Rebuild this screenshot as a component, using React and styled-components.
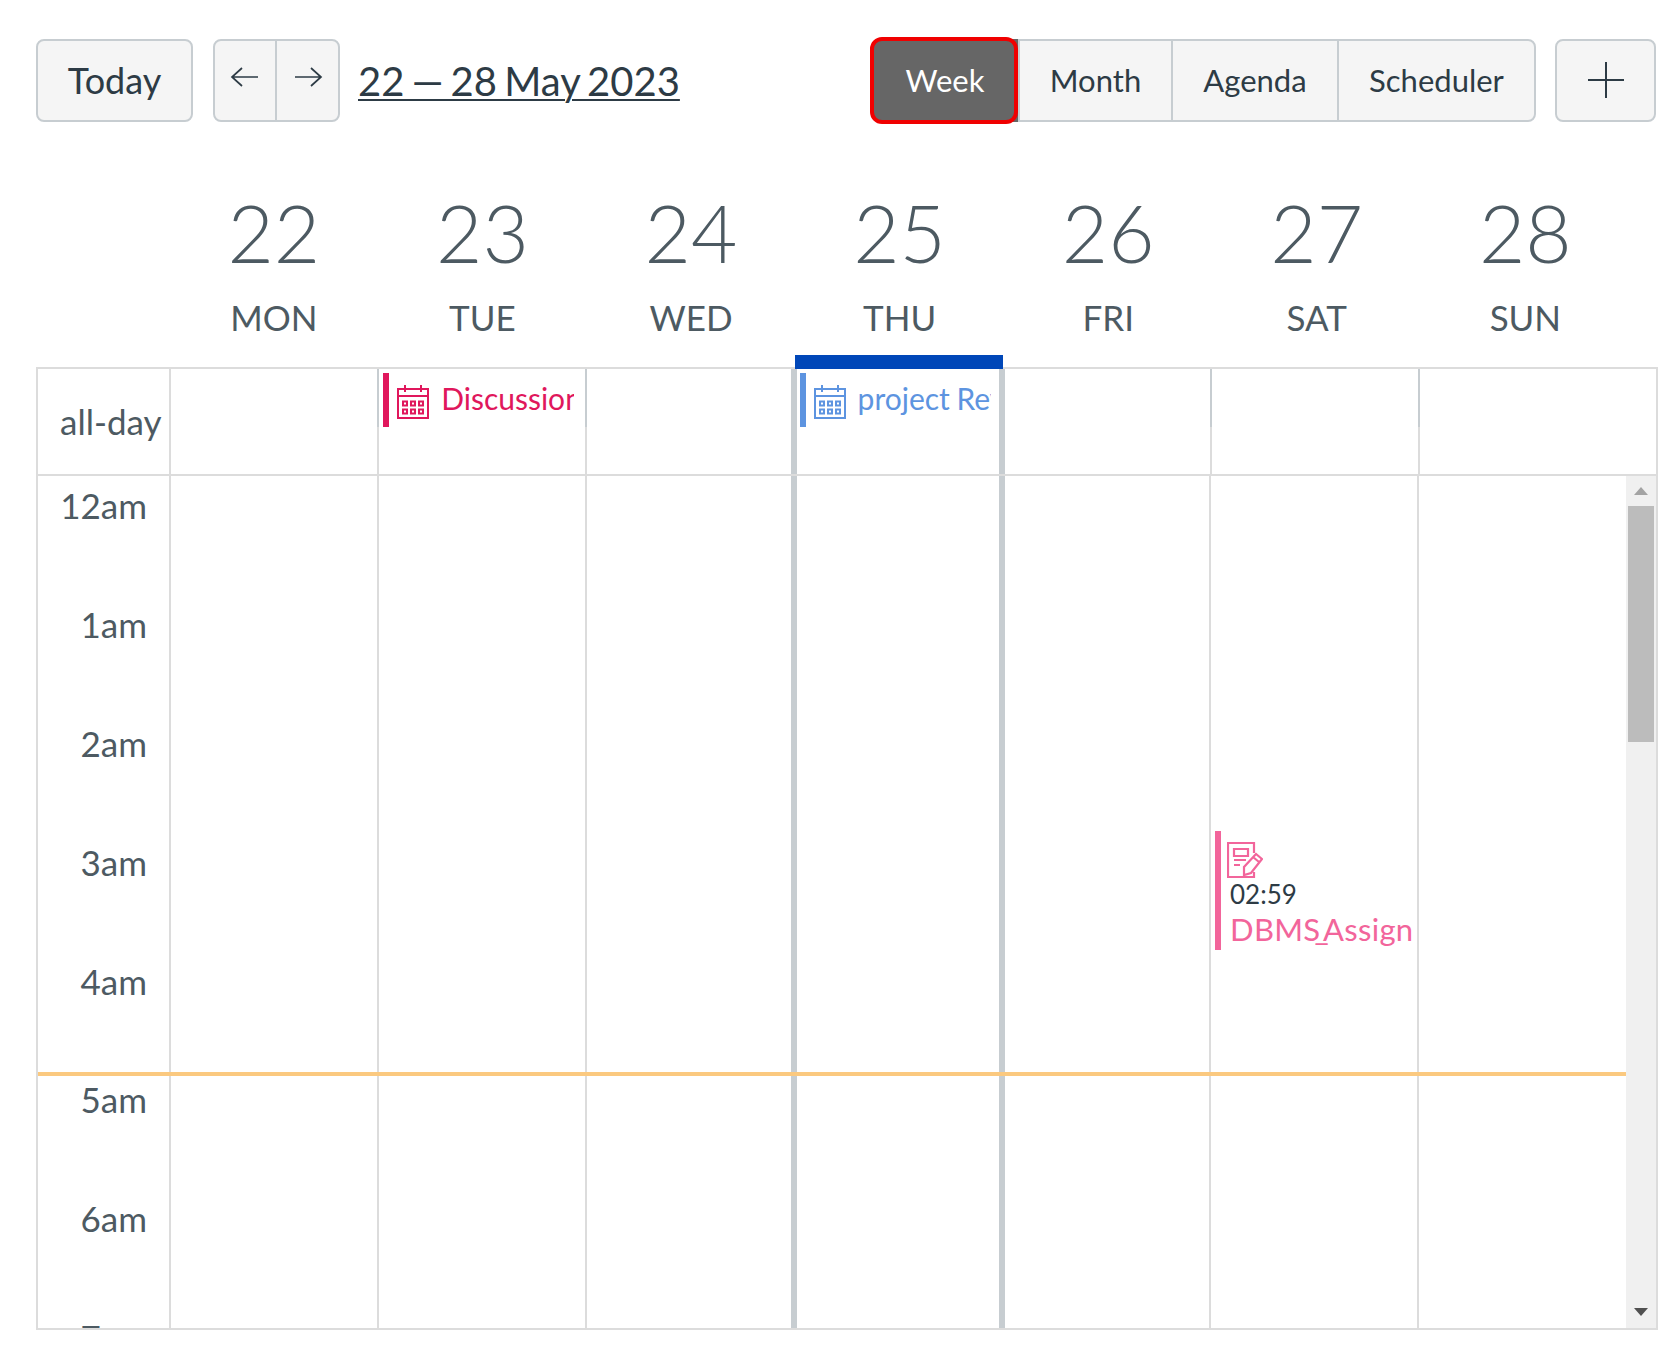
import styled, { createGlobalStyle } from "styled-components";

const colors = {
  text: "#2d3b45",
  label: "#4d5a62",
  line: "#dcdcdc",
  rail: "#c7cdd1",
  button: "#f5f5f5",
  red: "#e0175c",
  blue: "#5d94e0",
  pink: "#f2659b",
};

const GlobalStyle = createGlobalStyle`
  html, body {
    margin: 0;
    background: white;
    font-family: Lato, "Open Sans", "Liberation Sans", sans-serif;
    color: ${colors.text};
  }
`;

const Page = styled.div`
  width: 1678px;
  height: 1362px;
  box-sizing: border-box;
  padding: 39px 20px 0 36px;
  overflow: hidden;
`;

const Toolbar = styled.div`
  display: flex;
  align-items: center;
  height: 83px;
  padding-right: 2px;
`;

const Button = styled.button`
  height: 83px;
  box-sizing: border-box;
  display: flex;
  align-items: center;
  justify-content: center;
  background: ${colors.button};
  border: 2px solid ${colors.rail};
  border-radius: 8px;
  color: ${colors.text};
  font: 400 36px Lato, sans-serif;
  padding: 0 0 2px;
  width: ${(p) => p.$width}px;
  margin-left: ${(p) => p.$gap || 0}px;
`;

const NavGroup = styled.div`
  display: flex;
  height: 83px;
  width: 127px;
  box-sizing: border-box;
  margin-left: 20px;
  background: ${colors.button};
  border: 2px solid ${colors.rail};
  border-radius: 8px;
`;

const NavButton = styled.button`
  flex: 0 0 60px;
  padding: 0 0 8px;
  background: none;
  border: none;
  color: ${colors.text};
  display: flex;
  align-items: center;
  justify-content: center;
  & + & {
    flex: 1;
    border-left: 2px solid ${colors.rail};
  }
`;

const DateTitle = styled.a`
  margin-left: 18px;
  font-size: 40px;
  word-spacing: -3px;
  text-decoration: underline;
  text-decoration-thickness: 2px;
  text-underline-offset: 3px;
  color: ${colors.text};
`;

const ViewGroup = styled.div`
  margin-left: auto;
  display: flex;
  height: 83px;
  box-sizing: border-box;
  background: ${colors.button};
  border: 2px solid ${colors.rail};
  border-radius: 8px;
`;

const ViewButton = styled.button`
  position: relative;
  box-sizing: border-box;
  width: ${(p) => p.$width}px;
  padding: 0 0 2px;
  font: 400 31px Lato, sans-serif;
  border: none;
  background: ${(p) => (p.$active ? "#666666" : "none")};
  color: ${(p) => (p.$active ? "white" : colors.text)};
  & + & {
    border-left: 2px solid ${colors.rail};
  }
  ${(p) =>
    p.$active &&
    `
    margin: -2px 0 -2px -2px;
    height: 83px;
    border-radius: 12px 0 0 12px;
    & + button { border-left: none; }
    &::after {
      content: "";
      position: absolute;
      inset: -2px 0 -2px -2px;
      border: 4px solid #f00000;
      border-radius: 12px;
    }
  `}
`;

const DayHeader = styled.div`
  display: grid;
  grid-template-columns: 133px repeat(7, 208.6px);
  padding-left: 2px;
  height: 245px;
  box-sizing: border-box;
`;

const DayHead = styled.div`
  position: relative;
  text-align: center;
  padding-right: 3px;
  ${(p) =>
    p.$today &&
    `
    &::after {
      content: "";
      position: absolute;
      left: -2px;
      right: 2px;
      bottom: -2px;
      height: 14px;
      background: #0047b8;
    }
  `}
`;

const DayNumber = styled.div`
  font-size: 80px;
  font-weight: 300;
  line-height: 80px;
  margin-top: 70px;
  color: ${colors.label};
`;

const DayName = styled.div`
  font-size: 35px;
  line-height: 40px;
  margin-top: 25px;
  color: ${colors.label};
`;

const Calendar = styled.div`
  border: 2px solid ${colors.line};
  width: 1622px;
  box-sizing: border-box;
`;

const AllDayRow = styled.div`
  display: grid;
  grid-template-columns: 133px repeat(6, 208.2px) 1fr;
  height: 107px;
  box-sizing: border-box;
  border-bottom: 2px solid ${colors.line};
`;

const AllDayLabel = styled.div`
  font-size: 35px;
  color: ${colors.label};
  padding: 31px 0 0 22px;
  white-space: nowrap;
  border-right: 2px solid ${colors.line};
`;

const AllDayCell = styled.div`
  position: relative;
  min-width: 0;
  padding: 4px 11px 0 4px;
  border-right: 2px solid ${(p) => (p.$last ? "transparent" : colors.line)};
  &::after {
    content: "";
    display: ${(p) => (p.$last ? "none" : "block")};
    position: absolute;
    top: 0;
    right: -2px;
    width: 2px;
    height: 58px;
    background: ${colors.rail};
  }
  ${(p) =>
    p.$today &&
    `
    &::before, &::after {
      content: "";
      display: block;
      position: absolute;
      top: 0;
      bottom: 0;
      height: auto;
      width: 6px;
      background: ${colors.rail};
    }
    &::before { left: -5px; }
    &::after { right: -3px; }
  `}
`;

const AllDayEvent = styled.div`
  display: flex;
  align-items: flex-start;
  height: 54px;
  overflow: hidden;
  border-left: 6px solid ${(p) => p.$color};
  color: ${(p) => p.$color};
  font-size: 30px;
  word-spacing: -1px;
  line-height: 51px;
  white-space: nowrap;
  padding-left: 8px;
  box-sizing: border-box;
  svg {
    flex: none;
    margin: 10px 12px 0 0;
  }
`;

const TimeArea = styled.div`
  display: flex;
  height: 852px;
  overflow: hidden;
`;

const TimeGrid = styled.div`
  flex: 1;
  display: grid;
  grid-template-columns: 133px repeat(6, 208px) 1fr;
  position: relative;
  overflow: hidden;
`;

const HourColumn = styled.div`
  border-right: 2px solid ${colors.line};
  overflow: hidden;
`;

const HourLabel = styled.div`
  height: 118.9px;
  padding: 4px 22px 0 0;
  box-sizing: border-box;
  text-align: right;
  font-size: 35px;
  line-height: 50px;
  color: ${colors.label};
`;

const DayColumn = styled.div`
  position: relative;
  min-width: 0;
  border-right: 2px solid ${(p) => (p.$last ? "transparent" : colors.line)};
  ${(p) =>
    p.$today &&
    `
    &::before, &::after {
      content: "";
      position: absolute;
      top: 0;
      bottom: 0;
      width: 6px;
      background: ${colors.rail};
    }
    &::before { left: -4px; }
    &::after { right: -4px; }
  `}
`;

const TimedEvent = styled.div`
  position: absolute;
  left: 4px;
  right: 4px;
  top: ${(p) => p.$top}px;
  height: 119px;
  overflow: hidden;
  box-sizing: border-box;
  border-left: 6px solid ${colors.pink};
  padding: 11px 0 0 6px;
  color: ${colors.pink};
  white-space: nowrap;
  svg {
    display: block;
  }
`;

const EventTime = styled.div`
  font-size: 26px;
  line-height: 30px;
  margin: 1px 0 0 3px;
  color: ${colors.text};
`;

const EventName = styled.div`
  font-size: 31px;
  letter-spacing: 0.3px;
  line-height: 41px;
  margin-left: 3px;
`;

const Underscore = styled.span`
  margin: 0 -6px;
`;

const NowLine = styled.div`
  position: absolute;
  left: 0;
  right: 0;
  top: ${(p) => p.$top}px;
  height: 4px;
  background: #fbc97f;
`;

const Scrollbar = styled.div`
  width: 30px;
  flex: none;
  box-sizing: border-box;
  background: #f0f0f0;
  display: flex;
  flex-direction: column;
  align-items: center;
  padding-top: 11px;
`;

const ScrollArrow = styled.div`
  width: 0;
  height: 0;
  border-left: 7px solid transparent;
  border-right: 7px solid transparent;
  ${(p) =>
    p.$down
      ? "border-top: 8px solid #505050; margin-top: auto; margin-bottom: 12px;"
      : "border-bottom: 8px solid #a3a3a3;"}
`;

const ScrollThumb = styled.div`
  width: 26px;
  height: 236px;
  margin-top: 11px;
  background: #bcbcbc;
`;

const days = [
  ["22", "MON"],
  ["23", "TUE"],
  ["24", "WED"],
  ["25", "THU"],
  ["26", "FRI"],
  ["27", "SAT"],
  ["28", "SUN"],
];

const hours = ["12am", "1am", "2am", "3am", "4am", "5am", "6am", "7am"];

const HOUR_HEIGHT = 118.7;

const ArrowIcon = ({ flip }) => (
  <svg width="30" height="22" viewBox="0 0 30 22" fill="none" stroke="currentColor" strokeWidth="1.7">
    {flip ? (
      <path d="M2 11h26M18 2l10 9-10 9" />
    ) : (
      <path d="M28 11H2M12 2 2 11l10 9" />
    )}
  </svg>
);

const CalendarIcon = () => (
  <svg width="32" height="36" viewBox="0 0 32 36" fill="none" stroke="currentColor" strokeWidth="2">
    <path d="M1 6h30v29H1zM1 13h30M8 2v7M24 2v7" />
    <path d="M6 18.5h4v4H6zM14 18.5h4v4h-4zM22 18.5h4v4h-4zM6 26.5h4v4H6zM14 26.5h4v4h-4zM22 26.5h4v4h-4z" />
  </svg>
);

const AssignmentIcon = () => (
  <svg width="36" height="36" viewBox="0 0 36 36" fill="none" stroke="currentColor" strokeWidth="2.2">
    <path d="M27 11V1H1v34h26v-5" />
    <path d="M7 7h14v7H7zM7 18h12M7 23h6" />
    <path d="M17 33v-8L29 12l6 5-11 14zM26 15l6 5" />
  </svg>
);

export default function App() {
  return (
    <Page>
      <GlobalStyle />
      <Toolbar>
        <Button $width={157}>Today</Button>
        <NavGroup>
          <NavButton>
            <ArrowIcon />
          </NavButton>
          <NavButton>
            <ArrowIcon flip />
          </NavButton>
        </NavGroup>
        <DateTitle>22 — 28 May 2023</DateTitle>
        <ViewGroup>
          <ViewButton $active $width={146}>
            Week
          </ViewButton>
          <ViewButton $width={153}>Month</ViewButton>
          <ViewButton $width={166}>Agenda</ViewButton>
          <ViewButton $width={197}>Scheduler</ViewButton>
        </ViewGroup>
        <Button $width={101} $gap={19}>
          <svg width="38" height="38" viewBox="0 0 38 38" stroke="currentColor" strokeWidth="2">
            <path d="M19 1v36M1 19h36" />
          </svg>
        </Button>
      </Toolbar>

      <DayHeader>
        <div />
        {days.map(([num, name]) => (
          <DayHead key={num} $today={num === "25"}>
            <DayNumber>{num}</DayNumber>
            <DayName>{name}</DayName>
          </DayHead>
        ))}
      </DayHeader>

      <Calendar>
        <AllDayRow>
          <AllDayLabel>all-day</AllDayLabel>
          <AllDayCell />
          <AllDayCell>
            <AllDayEvent $color={colors.red}>
              <CalendarIcon />
              Discussion
            </AllDayEvent>
          </AllDayCell>
          <AllDayCell />
          <AllDayCell $today>
            <AllDayEvent $color={colors.blue}>
              <CalendarIcon />
              project Review
            </AllDayEvent>
          </AllDayCell>
          <AllDayCell />
          <AllDayCell />
          <AllDayCell $last />
        </AllDayRow>
        <TimeArea>
          <TimeGrid>
            <HourColumn>
              {hours.map((h) => (
                <HourLabel key={h}>{h}</HourLabel>
              ))}
            </HourColumn>
            {days.map(([num], i) => (
              <DayColumn key={num} $today={num === "25"} $last={i === 6}>
                {num === "27" && (
                  <TimedEvent $top={Math.round(HOUR_HEIGHT * 2.99)}>
                    <AssignmentIcon />
                    <EventTime>02:59</EventTime>
                    <EventName>
                      DBMS<Underscore>_</Underscore>Assignment
                    </EventName>
                  </TimedEvent>
                )}
              </DayColumn>
            ))}
            <NowLine $top={596} />
          </TimeGrid>
          <Scrollbar>
            <ScrollArrow />
            <ScrollThumb />
            <ScrollArrow $down />
          </Scrollbar>
        </TimeArea>
      </Calendar>
    </Page>
  );
}
